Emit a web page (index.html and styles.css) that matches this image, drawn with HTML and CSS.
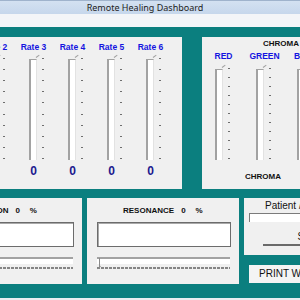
FILE: index.html
```html
<!DOCTYPE html>
<html lang="en">
<head>
    <meta charset="UTF-8">
    <title>Remote Healing Dashboard</title>
    <link rel="stylesheet" href="styles.css">
</head>
<body>
    <div class="window">
        <div class="titlebar">Remote Healing Dashboard</div>
        <div class="menubar"></div>

        <div class="client">
            <div class="row-top">
                <!-- rate sliders -->
                <div class="panel rates">
                    <div class="rate">
                        <div class="rate-label">Rate 1</div>
                        <div class="vslider"><div class="track"></div><div class="ticks"><span></span><span></span><span></span><span></span><span></span><span></span><span></span><span></span><span></span><span></span></div></div>
                        <div class="rate-value">0</div>
                    </div>
                    <div class="rate">
                        <div class="rate-label">Rate 2</div>
                        <div class="vslider"><div class="track"></div><div class="ticks"><span></span><span></span><span></span><span></span><span></span><span></span><span></span><span></span><span></span><span></span></div></div>
                        <div class="rate-value">0</div>
                    </div>
                    <div class="rate">
                        <div class="rate-label">Rate 3</div>
                        <div class="vslider"><div class="track"></div><div class="ticks"><span></span><span></span><span></span><span></span><span></span><span></span><span></span><span></span><span></span><span></span></div></div>
                        <div class="rate-value">0</div>
                    </div>
                    <div class="rate">
                        <div class="rate-label">Rate 4</div>
                        <div class="vslider"><div class="track"></div><div class="ticks"><span></span><span></span><span></span><span></span><span></span><span></span><span></span><span></span><span></span><span></span></div></div>
                        <div class="rate-value">0</div>
                    </div>
                    <div class="rate">
                        <div class="rate-label">Rate 5</div>
                        <div class="vslider"><div class="track"></div><div class="ticks"><span></span><span></span><span></span><span></span><span></span><span></span><span></span><span></span><span></span><span></span></div></div>
                        <div class="rate-value">0</div>
                    </div>
                    <div class="rate">
                        <div class="rate-label">Rate 6</div>
                        <div class="vslider"><div class="track"></div><div class="ticks"><span></span><span></span><span></span><span></span><span></span><span></span><span></span><span></span><span></span><span></span></div></div>
                        <div class="rate-value">0</div>
                    </div>
                </div>

                <!-- chroma sliders -->
                <div class="panel chroma">
                    <div class="chroma-title">CHROMA</div>
                    <div class="chroma-cols">
                        <div class="chroma-col">
                            <div class="rate-label">RED</div>
                            <div class="vslider short"><div class="track"></div><div class="ticks"><span></span><span></span><span></span><span></span><span></span><span></span><span></span><span></span><span></span><span></span><span></span></div></div>
                        </div>
                        <div class="chroma-col">
                            <div class="rate-label">GREEN</div>
                            <div class="vslider short"><div class="track"></div><div class="ticks"><span></span><span></span><span></span><span></span><span></span><span></span><span></span><span></span><span></span><span></span><span></span></div></div>
                        </div>
                        <div class="chroma-col">
                            <div class="rate-label">BLUE</div>
                            <div class="vslider short"><div class="track"></div><div class="ticks"><span></span><span></span><span></span><span></span><span></span><span></span><span></span><span></span><span></span><span></span><span></span></div></div>
                        </div>
                    </div>
                    <div class="chroma-foot">CHROMA</div>
                </div>
            </div>

            <div class="row-bottom">
                <div class="panel meter">
                    <div class="meter-label">VIBRATION<span class="num">0</span><span class="pct">%</span></div>
                    <div class="meter-box"></div>
                    <div class="htrack"></div>
                    <div class="hticks"></div>
                </div>
                <div class="panel meter">
                    <div class="meter-label">RESONANCE<span class="num">0</span><span class="pct">%</span></div>
                    <div class="meter-box"></div>
                    <div class="htrack thumb"></div>
                    <div class="hticks"></div>
                </div>
                <div class="side">
                    <div class="panel patient">
                        <div class="patient-label">Patient / Client Name</div>
                        <div class="patient-input"></div>
                        <div class="btn">Submit</div>
                    </div>
                    <div class="print-btn">PRINT WORKSHEET</div>
                </div>
            </div>
        </div>
        <div class="statusbar"></div>
    </div>
</body>
</html>
```

FILE: styles.css
```css
* {
    margin: 0;
    padding: 0;
    box-sizing: border-box;
}

body {
    width: 300px;
    height: 300px;
    overflow: hidden;
    background: #0b7f7f;
    font-family: 'Liberation Sans', Arial, sans-serif;
}

.window {
    width: 490px;
    height: 300px;
    margin-left: -100px;
    display: flex;
    flex-direction: column;
}

.titlebar {
    height: 14px;
    line-height: 13px;
    text-align: center;
    font-family: 'Noto Sans', sans-serif;
    font-size: 9px;
    color: #222;
    background: linear-gradient(#d3e1f1, #c6d7ec);
    border-top: 1px solid #9fb3cc;
}

.menubar {
    height: 13px;
    background: #f3f5f8;
}

.client {
    flex: 1;
    background: #0b7f7f;
    padding: 10px 10px 0 29px;
}

.statusbar {
    height: 2px;
    background: #e9eef1;
}

.panel {
    background: #f0f0f0;
}

.row-top {
    display: flex;
    gap: 20px;
    height: 152px;
}

.row-bottom {
    display: flex;
    gap: 5px;
    height: 86px;
    margin-top: 9px;
}

/* rates */
.rates {
    width: 253px;
    display: grid;
    grid-template-columns: repeat(6, 39px);
    padding: 5px 0 0 7px;
}

.rate-label {
    height: 10px;
    line-height: 10px;
    font-size: 8.5px;
    font-weight: 700;
    color: #1414e0;
    text-align: center;
    white-space: nowrap;
}

.vslider {
    display: flex;
    gap: 5px;
    margin-top: 6px;
    padding-left: 15px;
}

.track {
    position: relative;
    width: 8px;
    height: 101px;
    margin-top: 1px;
    background: #fff;
    border-left: 2px solid #a2a2a2;
    border-top: 1px solid #a2a2a2;
    border-right: 1px solid #e2e2e2;
}

/* outline of the thumb sitting at the top */
.track::after {
    content: '';
    position: absolute;
    top: -3px;
    right: -4px;
    width: 4px;
    height: 1px;
    background: #a2a2a2;
    transform: rotate(-35deg);
    transform-origin: left;
}

.ticks {
    height: 101px;
    display: flex;
    flex-direction: column;
    justify-content: space-between;
}

.ticks span {
    display: block;
    width: 2px;
    height: 1px;
    background: #6e6e6e;
}

.rate-value {
    margin-top: 5px;
    height: 13px;
    line-height: 13px;
    text-align: center;
    font-size: 12px;
    font-weight: 700;
    color: #1a1a8e;
}

/* chroma */
.chroma {
    flex: 1;
    padding-top: 2px;
}

.chroma-title,
.chroma-foot {
    height: 10px;
    line-height: 10px;
    font-size: 8px;
    font-weight: 700;
    color: #111;
}

.chroma-title {
    padding-left: 61px;
}

.chroma-foot {
    margin-top: 12px;
    padding-left: 43px;
}

.chroma-cols {
    display: grid;
    grid-template-columns: repeat(3, 41px);
    margin: 2px 0 0 1px;
}

.vslider.short {
    margin-top: 7px;
    padding-left: 12px;
}

.vslider.short .track {
    height: 91px;
}

.vslider.short .ticks {
    height: 91px;
}

/* meters */
.meter {
    width: 153px;
    padding-top: 8px;
}

.meter + .meter {
    width: 152px;
}

.meter-label {
    height: 10px;
    line-height: 10px;
    padding-left: 36px;
    font-size: 8px;
    font-weight: 700;
    color: #111;
}

.meter-label .num {
    margin-left: 7px;
}

.meter-label .pct {
    margin-left: 10px;
}

.meter-box {
    height: 25px;
    margin: 6px 8px 0 10px;
    background: #fff;
    border: 1px solid #6c6c6c;
    box-shadow: inset 1px 1px 0 #a9a9a9;
}

.htrack {
    position: relative;
    height: 7px;
    margin: 10px 9px 0 10px;
    background: #fff;
    border-top: 2px solid #a2a2a2;
}

.htrack.thumb::before {
    content: '';
    position: absolute;
    left: 2px;
    top: -1px;
    width: 1px;
    height: 9px;
    background: #8a8a8a;
}

.htrack.thumb::after {
    content: '';
    position: absolute;
    left: 0;
    top: 8px;
    width: 4px;
    height: 1px;
    background: #8a8a8a;
    transform: rotate(-40deg);
}

.hticks {
    height: 2px;
    margin: 3px 9px 0 10px;
    background: repeating-linear-gradient(90deg, #858585 0 3px, transparent 3px 4px);
}

/* patient side */
.side {
    width: 136px;
    display: flex;
    flex-direction: column;
}

.patient {
    height: 57px;
    padding-top: 2px;
}

.patient-label {
    height: 12px;
    line-height: 12px;
    padding-left: 21px;
    font-size: 10px;
    color: #111;
    white-space: nowrap;
}

.patient-input {
    height: 9px;
    margin: 1px 0 0 5px;
    background: #fff;
    border-top: 1px solid #7b7b7b;
    border-left: 1px solid #7b7b7b;
}

.btn {
    width: 100px;
    height: 17px;
    margin: 7px 0 0 19px;
    line-height: 15px;
    text-align: center;
    font-size: 10px;
    color: #111;
    background: #f0f0f0;
    border-bottom: 2px solid #6a6a6a;
}

.print-btn {
    height: 18px;
    margin: 10px 0 0 5px;
    padding-left: 10px;
    line-height: 18px;
    font-size: 10px;
    color: #111;
    white-space: nowrap;
    background: #f4f4f4;
}
```
